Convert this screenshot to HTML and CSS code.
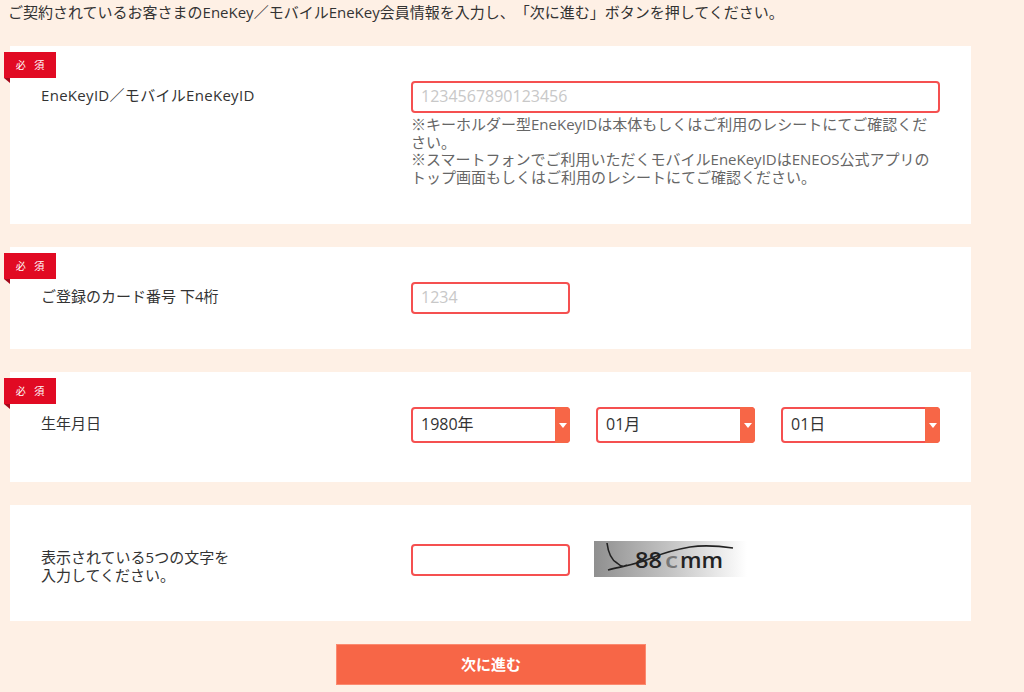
FILE: index.html
```html
<!DOCTYPE html>
<html lang="ja">
<head>
  <meta charset="UTF-8">
  <title>EneKey会員情報入力</title>
  <link rel="stylesheet" href="styles.css">
</head>
<body>
  <p class="intro">ご契約されているお客さまのEneKey／モバイルEneKey会員情報を入力し、「次に進む」ボタンを押してください。</p>
  <form class="formulario">
    <div class="fila fila-id">
      <span class="requerido">必 須</span>
      <label class="etiqueta" for="enekey">EneKeyID／モバイルEneKeyID</label>
      <div class="campo">
        <input id="enekey" class="entrada" type="text" placeholder="1234567890123456">
        <p class="nota">※キーホルダー型EneKeyIDは本体もしくはご利用のレシートにてご確認ください。<br>※スマートフォンでご利用いただくモバイルEneKeyIDはENEOS公式アプリのトップ画面もしくはご利用のレシートにてご確認ください。</p>
      </div>
    </div>
    <div class="fila fila-tarjeta">
      <span class="requerido">必 須</span>
      <label class="etiqueta" for="tarjeta">ご登録のカード番号 下4桁</label>
      <div class="campo">
        <input id="tarjeta" class="entrada corta" type="text" placeholder="1234">
      </div>
    </div>
    <div class="fila fila-fecha">
      <span class="requerido">必 須</span>
      <label class="etiqueta" for="anio">生年月日</label>
      <div class="campo selectores">
        <div class="selector"><select id="anio"><option>1980年</option></select></div>
        <div class="selector"><select><option>01月</option></select></div>
        <div class="selector"><select><option>01日</option></select></div>
      </div>
    </div>
    <div class="fila fila-captcha">
      <label class="etiqueta" for="captcha">表示されている5つの文字を<br>入力してください。</label>
      <div class="campo captcha">
        <input id="captcha" class="entrada corta" type="text">
        <svg class="captcha-img" width="153" height="36" viewBox="0 0 153 36">
          <defs>
            <linearGradient id="fondo">
              <stop offset="0" stop-color="#8f8f8f"/>
              <stop offset="0.5" stop-color="#c4c4c4"/>
              <stop offset="1" stop-color="#ffffff"/>
            </linearGradient>
          </defs>
          <rect width="153" height="36" fill="url(#fondo)"/>
          <text class="captcha-texto" x="41" y="27" textLength="27" lengthAdjust="spacingAndGlyphs">88</text>
          <text class="captcha-texto borroso" x="71" y="27" textLength="13" lengthAdjust="spacingAndGlyphs">c</text>
          <text class="captcha-texto" x="86" y="27" textLength="43" lengthAdjust="spacingAndGlyphs">mm</text>
          <path d="M13 2 C14 10 16 18 23 22 C26 25 30 26 33 24 M14 29 C30 25 45 23 60 16 C72 11 85 8 96 6 C110 4 125 5 139 7" fill="none" stroke="#222" stroke-width="1.6"/>
        </svg>
      </div>
    </div>
    <button class="boton" type="button">次に進む</button>
  </form>
</body>
</html>
```

FILE: styles.css
```css
* {
  box-sizing: border-box;
}
body {
  margin: 0;
  background-color: #fef0e5;
  color: #333;
  font-family: "Open Sans", "Noto Sans CJK JP", sans-serif;
  font-size: 15px;
  line-height: 18px;
  text-spacing-trim: space-all;
}
.intro {
  margin: 0;
  padding: 3px 0 0 8px;
  height: 46px;
}
.formulario {
  display: flex;
  flex-direction: column;
  gap: 23px;
  width: 961px;
  margin-left: 10px;
}
.fila {
  position: relative;
  display: flex;
  background-color: #fff;
  padding: 35px 31px 35px 31px;
}
.fila-id {
  height: 178px;
}
.fila-id .etiqueta {
  letter-spacing: 0.3px;
}
.fila-tarjeta {
  height: 102px;
}
.fila-fecha {
  height: 110px;
}
.fila-captcha {
  height: 116px;
  padding-top: 39px;
}
.requerido {
  position: absolute;
  left: -6px;
  top: 6px;
  width: 52px;
  height: 26px;
  background-color: #e10a23;
  color: #fff;
  font-size: 10px;
  line-height: 26px;
  text-align: center;
  word-spacing: 6px;
}
.requerido::after {
  content: "";
  position: absolute;
  left: 0;
  top: 26px;
  border-top: 5px solid #a5081a;
  border-left: 6px solid transparent;
}
.etiqueta {
  width: 370px;
  flex-shrink: 0;
  padding-top: 5px;
}
.fila-fecha .etiqueta {
  padding-top: 7px;
}
.fila-captcha .etiqueta {
  padding-top: 4px;
}
.campo {
  width: 529px;
}
.entrada {
  display: block;
  width: 100%;
  height: 32px;
  padding: 0 8px 2px;
  border: 2px solid #f55050;
  border-radius: 4px;
  background-color: #fff;
  color: #333;
  font-family: inherit;
  font-size: 16px;
  outline: none;
}
.entrada::placeholder {
  color: #c8c8c8;
}
.corta {
  width: 159px;
}
.nota {
  margin: 3px 0 0;
  color: #666;
  line-height: 17.6px;
}
.selectores {
  display: flex;
  justify-content: space-between;
}
.selector {
  position: relative;
  width: 159px;
  height: 36px;
}
.selector select {
  width: 100%;
  height: 100%;
  padding: 0 8px 2px;
  border: 2px solid #f55050;
  border-radius: 4px;
  background-color: #fff;
  color: #333;
  font-family: inherit;
  font-size: 16px;
  appearance: none;
  outline: none;
}
.selector::after {
  content: "";
  position: absolute;
  top: 0;
  right: 0;
  width: 15px;
  height: 36px;
  border-radius: 0 4px 4px 0;
  background-color: #f76647;
}
.selector::before {
  content: "";
  position: absolute;
  z-index: 1;
  top: 16px;
  right: 3px;
  border-top: 5px solid #fff;
  border-left: 4.5px solid transparent;
  border-right: 4.5px solid transparent;
}
.captcha {
  display: flex;
  align-items: flex-start;
  gap: 24px;
}
.captcha-img {
  margin-top: -3px;
}
.captcha-texto {
  font-family: "Open Sans", sans-serif;
  font-size: 22px;
  font-weight: 600;
  fill: #222;
}
.borroso {
  fill: #777;
}
.boton {
  align-self: center;
  width: 310px;
  height: 41px;
  margin-left: 1px;
  padding-bottom: 3px;
  border: 1px solid #fb8a70;
  background-color: #f76647;
  color: #fff;
  font-family: inherit;
  font-size: 15px;
  font-weight: bold;
}
```
